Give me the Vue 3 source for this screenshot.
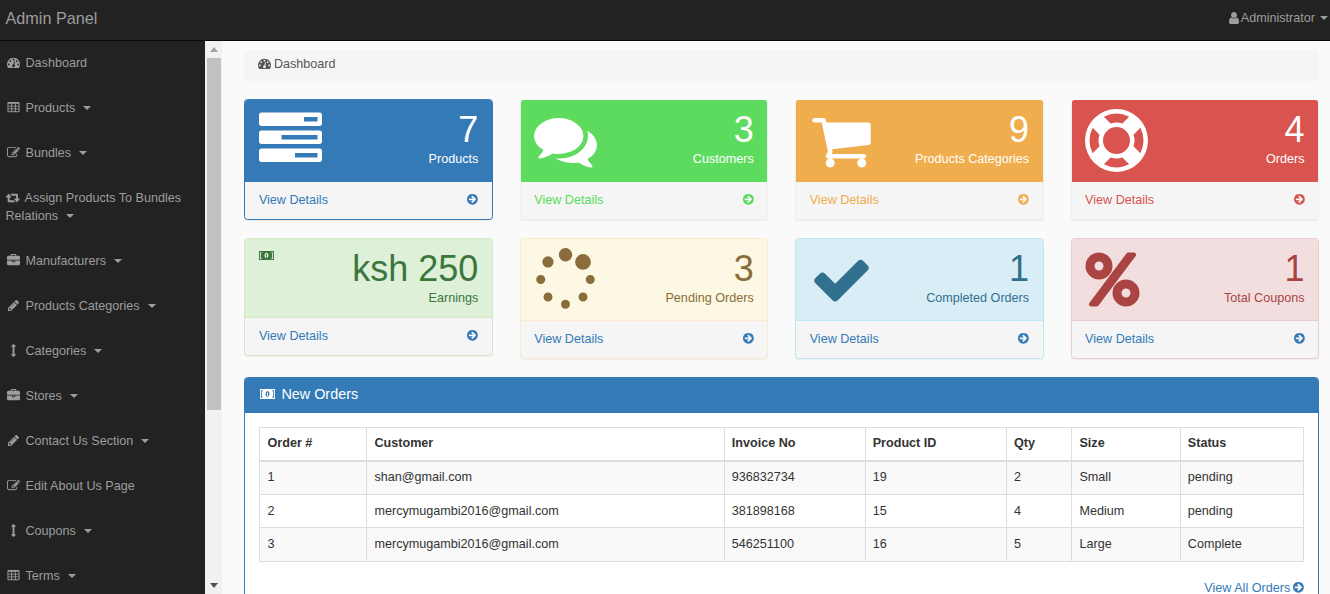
<script setup>
const icons = {
  dashboard: 'M384 1152q0-53-37.5-90.5t-90.5-37.5-90.5 37.5-37.5 90.5 37.5 90.5 90.5 37.5 90.5-37.5 37.5-90.5zm192-448q0-53-37.5-90.5t-90.5-37.5-90.5 37.5-37.5 90.5 37.5 90.5 90.5 37.5 90.5-37.5 37.5-90.5zm428 481l101-382q6-26-7.5-48.5t-38.5-29.5-48 6.5-30 39.5l-101 382q-60 5-107 43.5t-63 98.5q-20 77 20 146t117 89 146-20 89-117q16-60-6-117t-72-91zm660-33q0-53-37.5-90.5t-90.5-37.5-90.5 37.5-37.5 90.5 37.5 90.5 90.5 37.5 90.5-37.5 37.5-90.5zm-640-640q0-53-37.5-90.5t-90.5-37.5-90.5 37.5-37.5 90.5 37.5 90.5 90.5 37.5 90.5-37.5 37.5-90.5zm448 192q0-53-37.5-90.5t-90.5-37.5-90.5 37.5-37.5 90.5 37.5 90.5 90.5 37.5 90.5-37.5 37.5-90.5zm320 448q0 261-141 483-19 29-54 29h-1402q-35 0-54-29-141-221-141-483 0-182 71-348t191-286 286-191 348-71 348 71 286 191 191 286 71 348z',
  table: 'M576 1376v-192q0-14-9-23t-23-9h-320q-14 0-23 9t-9 23v192q0 14 9 23t23 9h320q14 0 23-9t9-23zm0-384v-192q0-14-9-23t-23-9h-320q-14 0-23 9t-9 23v192q0 14 9 23t23 9h320q14 0 23-9t9-23zm512 384v-192q0-14-9-23t-23-9h-320q-14 0-23 9t-9 23v192q0 14 9 23t23 9h320q14 0 23-9t9-23zm-512-768v-192q0-14-9-23t-23-9h-320q-14 0-23 9t-9 23v192q0 14 9 23t23 9h320q14 0 23-9t9-23zm512 384v-192q0-14-9-23t-23-9h-320q-14 0-23 9t-9 23v192q0 14 9 23t23 9h320q14 0 23-9t9-23zm512 384v-192q0-14-9-23t-23-9h-320q-14 0-23 9t-9 23v192q0 14 9 23t23 9h320q14 0 23-9t9-23zm-512-768v-192q0-14-9-23t-23-9h-320q-14 0-23 9t-9 23v192q0 14 9 23t23 9h320q14 0 23-9t9-23zm512 384v-192q0-14-9-23t-23-9h-320q-14 0-23 9t-9 23v192q0 14 9 23t23 9h320q14 0 23-9t9-23zm0-384v-192q0-14-9-23t-23-9h-320q-14 0-23 9t-9 23v192q0 14 9 23t23 9h320q14 0 23-9t9-23zm128-320v1088q0 66-47 113t-113 47h-1344q-66 0-113-47t-47-113v-1088q0-66 47-113t113-47h1344q66 0 113 47t47 113z',
  edit: 'M888 1184l116-116-152-152-116 116v56h96v96h56zm440-720q-16-16-33 1l-350 350q-17 17-1 33t33-1l350-350q17-17 1-33zm80 594v190q0 119-84.5 203.5t-203.5 84.5h-832q-119 0-203.5-84.5t-84.5-203.5v-832q0-119 84.5-203.5t203.5-84.5h832q63 0 117 25 15 7 18 23 3 17-9 29l-49 49q-14 14-32 8-23-6-45-6h-832q-66 0-113 47t-47 113v832q0 66 47 113t113 47h832q66 0 113-47t47-113v-126q0-13 9-22l64-64q15-15 35-7t20 29zm-96-738l288 288-672 672h-288v-288zm444 132l-92 92-288-288 92-92q28-28 68-28t68 28l152 152q28 28 28 68t-28 68z',
  retweet: 'M1216 1504q0 13-9.5 22.5t-22.5 9.5h-960q-8 0-13.5-2t-9-7-5.5-8-3-11.5-1-11.5v-600h-192q-26 0-45-19t-19-45q0-24 15-41l320-384q19-22 49-22t49 22l320 384q15 17 15 41 0 26-19 45t-45 19h-192v384h576q16 0 25 11l160 192q7 10 7 21zm640-416q0 24-15 41l-320 384q-20 23-49 23t-49-23l-320-384q-15-17-15-41 0-26 19-45t45-19h192v-384h-576q-16 0-25-12l-160-192q-7-9-7-20 0-13 9.5-22.5t22.5-9.5h960q8 0 13.5 2t9 7 5.5 8 3 11.5 1 11.5v600h192q26 0 45 19t19 45z',
  briefcase: 'M640 256h512v-128h-512v128zm1152 640v480q0 66-47 113t-113 47h-1472q-66 0-113-47t-47-113v-480h672v160q0 26 19 45t45 19h320q26 0 45-19t19-45v-160h672zm-768 0v128h-256v-128h256zm768-480v384h-1792v-384q0-66 47-113t113-47h352v-160q0-40 28-68t68-28h576q40 0 68 28t28 68v160h352q66 0 113 47t47 113z',
  pencil: 'M491 1536l91-91-235-235-91 91v107h128v128h107zm523-928q0-22-22-22-10 0-17 7l-542 542q-7 7-7 17 0 22 22 22 10 0 17-7l542-542q7-7 7-17zm-54-192l416 416-832 832h-416v-416zm683 96q0 53-37 90l-166 166-416-416 166-165q36-38 90-38 53 0 91 38l235 234q37 39 37 91z',
  arrows: 'M1216 320q0 26-19 45t-45 19h-128v1024h128q26 0 45 19t19 45-19 45l-256 256q-19 19-45 19t-45-19l-256-256q-19-19-19-45t19-45 45-19h128v-1024h-128q-26 0-45-19t-19-45 19-45l256-256q19-19 45-19t45 19l256 256q19 19 19 45z',
  user: 'M1536 1399q0 109-62.5 187t-150.5 78h-854q-88 0-150.5-78t-62.5-187q0-85 8.5-160.5t31.5-152 58.5-131 94-89 134.5-34.5q131 128 313 128t313-128q76 0 134.5 34.5t94 89 58.5 131 31.5 152 8.5 160.5zm-256-887q0 159-112.5 271.5t-271.5 112.5-271.5-112.5-112.5-271.5 112.5-271.5 271.5-112.5 271.5 112.5 112.5 271.5z',
  arrow: 'M1285 896q0-27-18-45l-91-91-362-362q-18-18-45-18t-45 18l-91 91q-18 18-18 45t18 45l189 189h-502q-26 0-45 19t-19 45v128q0 26 19 45t45 19h502l-189 189q-19 19-19 45t19 45l91 91q18 18 45 18t45-18l362-362 91-91q18-18 18-45zm251 0q0 209-103 385.5t-279.5 279.5-385.5 103-385.5-103-279.5-279.5-103-385.5 103-385.5 279.5-279.5 385.5-103 385.5 103 279.5 279.5 103 385.5z',
  tasks: 'M1024 1408h640v-128h-640v128zm-384-512h1024v-128h-1024v128zm640-512h384v-128h-384v128zm512 832v256q0 26-19 45t-45 19h-1664q-26 0-45-19t-19-45v-256q0-26 19-45t45-19h1664q26 0 45 19t19 45zm0-512v256q0 26-19 45t-45 19h-1664q-26 0-45-19t-19-45v-256q0-26 19-45t45-19h1664q26 0 45 19t19 45zm0-512v256q0 26-19 45t-45 19h-1664q-26 0-45-19t-19-45v-256q0-26 19-45t45-19h1664q26 0 45 19t19 45z',
  comments: 'M1408 768q0 139-94 257t-256.5 186.5-353.5 68.5q-86 0-176-16-124 88-278 128-36 9-86 16h-3q-11 0-20.5-8t-11.5-21q-1-3-1-6.5t.5-6.5 2-6l2.5-5 3.5-5.5 4-5 4.5-5 4-4.5q5-6 23-25t26-29.5 22.5-29 25-38.5 20.5-44q-124-72-195-177t-71-224q0-139 94-257t256.5-186.5 353.5-68.5 353.5 68.5 256.5 186.5 94 257zm384 256q0 120-71 224.5t-195 176.5q10 24 20.5 44t25 38.5 22.5 29 26 29.5 23 25q1 1 4 4.5t4.5 5 4 5 3.5 5.5l2.5 5 2 6 .5 6.5-1 6.5q-3 14-13 22t-22 7q-50-7-86-16-154-40-278-128-90 16-176 16-271 0-472-132 58 4 88 4 161 0 309-45t264-129q125-92 192-212t67-254q0-77-23-152 129 71 204 178t75 230z',
  cart: 'M704 1536q0 52-38 90t-90 38-90-38-38-90 38-90 90-38 90 38 38 90zm896 0q0 52-38 90t-90 38-90-38-38-90 38-90 90-38 90 38 38 90zm128-1088v512q0 24-16.5 42.5t-40.5 21.5l-1044 122q13 60 13 70 0 16-24 64h920q26 0 45 19t19 45-19 45-45 19h-1024q-26 0-45-19t-19-45q0-11 8-31.5t16-36 21.5-40 15.5-29.5l-177-823h-204q-26 0-45-19t-19-45 19-45 45-19h256q16 0 28.5 6.5t19.5 15.5 13 24.5 8 26 5.5 29.5 4.5 26h1201q26 0 45 19t19 45z',
  ring: 'M896 0q182 0 348 71t286 191 191 286 71 348-71 348-191 286-286 191-348 71-348-71-286-191-191-286-71-348 71-348 191-286 286-191 348-71zm0 128q-190 0-361 90l194 194q82-28 167-28t167 28l194-194q-171-90-361-90zm-678 1129l194-194q-28-82-28-167t28-167l-194-194q-90 171-90 361t90 361zm678 407q190 0 361-90l-194-194q-82 28-167 28t-167-28l-194 194q171 90 361 90zm0-384q159 0 271.5-112.5t112.5-271.5-112.5-271.5-271.5-112.5-271.5 112.5-112.5 271.5 112.5 271.5 271.5 112.5zm484-217l194 194q90-171 90-361t-90-361l-194 194q28 82 28 167t-28 167z',
  spinner: 'M526 1394q0 53-37.5 90.5t-90.5 37.5q-52 0-90-38t-38-90q0-53 37.5-90.5t90.5-37.5 90.5 37.5 37.5 90.5zm498 206q0 53-37.5 90.5t-90.5 37.5-90.5-37.5-37.5-90.5 37.5-90.5 90.5-37.5 90.5 37.5 37.5 90.5zm-704-704q0 53-37.5 90.5t-90.5 37.5-90.5-37.5-37.5-90.5 37.5-90.5 90.5-37.5 90.5 37.5 37.5 90.5zm1202 498q0 52-38 90t-90 38q-53 0-90.5-37.5t-37.5-90.5 37.5-90.5 90.5-37.5 90.5 37.5 37.5 90.5zm-964-996q0 66-47 113t-113 47-113-47-47-113 47-113 113-47 113 47 47 113zm1170 498q0 53-37.5 90.5t-90.5 37.5-90.5-37.5-37.5-90.5 37.5-90.5 90.5-37.5 90.5 37.5 37.5 90.5zm-640-704q0 80-56 136t-136 56-136-56-56-136 56-136 136-56 136 56 56 136zm530 206q0 93-66 158.5t-158 65.5q-93 0-158.5-65.5t-65.5-158.5q0-92 65.5-158t158.5-66q92 0 158 66t66 158z',
  check: 'M1671 566q0 40-28 68l-724 724-136 136q-28 28-68 28t-68-28l-136-136-362-362q-28-28-28-68t28-68l136-136q28-28 68-28t68 28l294 295 656-657q28-28 68-28t68 28l136 136q28 28 28 68z',
  percent: 'M1408 1280q0-52-38-90t-90-38-90 38-38 90 38 90 90 38 90-38 38-90zm-768-768q0-52-38-90t-90-38-90 38-38 90 38 90 90 38 90-38 38-90zm1024 768q0 159-112.5 271.5t-271.5 112.5-271.5-112.5-112.5-271.5 112.5-271.5 271.5-112.5 271.5 112.5 112.5 271.5zm-96-1088q0 20-13 38l-1056 1408q-19 26-51 26h-160q-26 0-45-19t-19-45q0-20 13-38l1056-1408q19-26 51-26h160q26 0 45 19t19 45zm-672 320q0 159-112.5 271.5t-271.5 112.5-271.5-112.5-112.5-271.5 112.5-271.5 271.5-112.5 271.5 112.5 112.5 271.5z',
  money: 'M0 384h2112v1024h-2112zM128 512v768h1856v-768zM256 640q128 0 128-128h1344q0 128 128 128v512q-128 0-128 128h-1344q0-128-128-128zM1056 576a272 320 0 1 0 1 0zM960 1152h224v-96h-64v-320h-80l-96 96 56 56 24-24v192h-64z'
}

const nav = [
  { icon: 'dashboard', label: 'Dashboard' },
  { icon: 'table', label: 'Products', caret: true },
  { icon: 'edit', label: 'Bundles', caret: true },
  { icon: 'retweet', label: 'Assign Products To Bundles Relations', caret: true, wide: true },
  { icon: 'briefcase', label: 'Manufacturers', caret: true },
  { icon: 'pencil', label: 'Products Categories', caret: true },
  { icon: 'arrows', label: 'Categories', caret: true },
  { icon: 'briefcase', label: 'Stores', caret: true },
  { icon: 'pencil', label: 'Contact Us Section', caret: true },
  { icon: 'edit', label: 'Edit About Us Page' },
  { icon: 'arrows', label: 'Coupons', caret: true },
  { icon: 'table', label: 'Terms', caret: true }
]

const cards = [
  { tone: 'blue', icon: 'tasks', value: '7', label: 'Products' },
  { tone: 'green', icon: 'comments', value: '3', label: 'Customers' },
  { tone: 'orange', icon: 'cart', value: '9', label: 'Products Categories' },
  { tone: 'red', icon: 'ring', value: '4', label: 'Orders' },
  { tone: 'success', icon: 'money', value: 'ksh 250', label: 'Earnings', small: true },
  { tone: 'warning', icon: 'spinner', value: '3', label: 'Pending Orders' },
  { tone: 'info', icon: 'check', value: '1', label: 'Completed Orders' },
  { tone: 'danger', icon: 'percent', value: '1', label: 'Total Coupons' }
]

const headers = ['Order #', 'Customer', 'Invoice No', 'Product ID', 'Qty', 'Size', 'Status']
const rows = [
  ['1', 'shan@gmail.com', '936832734', '19', '2', 'Small', 'pending'],
  ['2', 'mercymugambi2016@gmail.com', '381898168', '15', '4', 'Medium', 'pending'],
  ['3', 'mercymugambi2016@gmail.com', '546251100', '16', '5', 'Large', 'Complete']
]
</script>

<template>
  <div class="page">
    <header class="navbar">
      <span class="brand">Admin Panel</span>
      <span class="account">
        <svg class="ico user" viewBox="0 0 1792 1792"><path :d="icons.user" /></svg>
        Administrator
        <i class="caret account-caret"></i>
      </span>
    </header>

    <div class="shell">
      <aside class="sidebar">
        <nav class="menu">
          <a v-for="item in nav" :key="item.label" class="menu-item">
            <svg
              class="ico menu-ico"
              :class="{ 'menu-ico-wide': item.wide }"
              :viewBox="item.wide ? '0 0 1920 1792' : '0 0 1792 1792'"
            ><path :d="icons[item.icon]" /></svg>{{ item.label }}<i v-if="item.caret" class="caret menu-caret"></i>
          </a>
        </nav>
        <div class="scrollbar">
          <i class="sb-arrow sb-up"></i>
          <div class="sb-track"><div class="sb-thumb"></div></div>
          <i class="sb-arrow sb-down"></i>
        </div>
      </aside>

      <main class="content">
        <div class="breadcrumb">
          <svg class="ico crumb-ico" viewBox="0 0 1792 1792"><path :d="icons.dashboard" /></svg>Dashboard
        </div>

        <section class="cards">
          <article v-for="card in cards" :key="card.tone" class="card" :class="'tone-' + card.tone">
            <div class="card-head" :class="{ 'card-head-small': card.small }">
              <svg v-if="card.small" class="ico money-small" viewBox="0 384 2112 1024" preserveAspectRatio="none"><path fill-rule="evenodd" :d="icons.money" /></svg>
              <svg v-else class="ico big-ico" viewBox="0 0 1792 1792"><path :d="icons[card.icon]" /></svg>
              <div class="card-text">
                <div class="card-value">{{ card.value }}</div>
                <div class="card-label">{{ card.label }}</div>
              </div>
            </div>
            <a class="card-foot">
              <span>View Details</span>
              <svg class="ico foot-ico" viewBox="0 0 1536 1792"><path :d="icons.arrow" /></svg>
            </a>
          </article>
        </section>

        <section class="panel">
          <h3 class="panel-head">
            <svg class="ico panel-ico" viewBox="0 384 2112 1024" preserveAspectRatio="none"><path fill-rule="evenodd" :d="icons.money" /></svg>New Orders
          </h3>
          <div class="panel-body">
            <table class="orders">
              <thead>
                <tr><th v-for="h in headers" :key="h">{{ h }}</th></tr>
              </thead>
              <tbody>
                <tr v-for="row in rows" :key="row[0]">
                  <td v-for="(cell, i) in row" :key="i">{{ cell }}</td>
                </tr>
              </tbody>
            </table>
            <a class="all-orders">View All Orders<svg class="ico all-ico" viewBox="0 0 1536 1792"><path :d="icons.arrow" /></svg></a>
          </div>
        </section>
      </main>
    </div>
  </div>
</template>

<style>
html, body { margin: 0; overflow: hidden; }
</style>

<style scoped>
.page {
  height: 100vh;
  display: flex;
  flex-direction: column;
  overflow: hidden;
  font-family: "Liberation Sans", Arial, sans-serif;
  font-size: 12.6px;
  line-height: 18px;
  color: #333;
}
.ico { fill: currentColor; flex: none; }
.caret {
  display: inline-block;
  width: 0;
  height: 0;
  border-top: 4px solid currentColor;
  border-left: 4px solid transparent;
  border-right: 4px solid transparent;
}

.navbar {
  height: 40px;
  box-sizing: content-box;
  flex: none;
  display: flex;
  align-items: center;
  justify-content: space-between;
  background: #222;
  border-bottom: 1px solid #080808;
  color: #9d9d9d;
  padding: 0 2px 0 5.5px;
}
.brand { font-size: 16.2px; position: relative; top: -2px; }
.account { display: flex; align-items: center; position: relative; top: -2px; }
.user { width: 14px; height: 14px; }
.account-caret { margin-left: 5px; }

.shell { flex: 1; min-height: 0; display: flex; }
.sidebar { flex: none; width: 222px; display: flex; background: #222; }
.menu { width: 205px; overflow: hidden; color: #9d9d9d; }
.menu-item {
  display: block;
  padding: 12.5px 5.5px 14.5px;
}
.menu-ico { width: 13px; height: 13px; margin: 0 6px 0 1px; vertical-align: -2px; }
.menu-ico-wide { width: 14.5px; margin-right: 4px; margin-left: 0.5px; }
.menu-caret { margin-left: 8px; vertical-align: 2px; }

.scrollbar {
  width: 17px;
  background: #f1f1f1;
  display: flex;
  flex-direction: column;
  align-items: center;
}
.sb-arrow { flex: none; width: 0; height: 0; border-left: 4px solid transparent; border-right: 4px solid transparent; }
.sb-up { margin: 6px 0 6px; border-bottom: 5px solid #a3a3a3; }
.sb-down { margin: 6px 0; border-top: 5px solid #505050; }
.sb-track { flex: 1; width: 100%; }
.sb-thumb { width: 14px; height: 352px; margin-left: 2px; background: #c1c1c1; }

.content {
  flex: 1;
  min-width: 0;
  background: #fafafa;
  padding: 9px 11px 0 22.4px;
  overflow: hidden;
}
.breadcrumb {
  height: 31px;
  box-sizing: border-box;
  padding: 5px 13.5px;
  background: #f5f5f5;
  border-radius: 3.6px;
  color: #555;
  margin-bottom: 18px;
}
.crumb-ico { width: 13px; height: 13px; margin-right: 3px; vertical-align: -2px; }

.cards {
  display: grid;
  grid-template-columns: repeat(4, 1fr);
  column-gap: 27px;
  row-gap: 18px;
  align-items: start;
  margin-bottom: 18px;
}
.card {
  border: 1px solid transparent;
  border-radius: 3.6px;
  background: #f5f5f5;
  box-shadow: 0 1px 1px rgba(0, 0, 0, 0.05);
  overflow: hidden;
  background-clip: padding-box;
}
.card-head {
  display: flex;
  justify-content: space-between;
  align-items: flex-start;
  padding: 10px 13.5px 9px;
  height: 82px;
  box-sizing: border-box;
}
.card-head-small { height: 79px; }
.big-ico { width: 63px; height: 63px; margin-top: -1px; }
.tone-blue .big-ico { margin-top: -2px; }
.tone-danger .big-ico { margin-left: -4.5px; }
.money-small { width: 15px; height: 9px; margin-top: 2px; }
.card-text { text-align: right; }
.card-value { font-size: 36px; line-height: 39.6px; }
.card-foot {
  display: flex;
  justify-content: space-between;
  align-items: center;
  padding: 8px 13.5px 10px;
  height: 37px;
  box-sizing: border-box;
  color: #337ab7;
}
.foot-ico { width: 10.8px; height: 12.6px; }

.tone-blue { border-color: #337ab7; }
.tone-blue .card-head { background: #337ab7; color: #fff; }
.tone-green .card-head { background: #5cdb5e; color: #fff; }
.tone-green .card-foot { color: #5cdb5e; }
.tone-orange .card-head { background: #f0ad4e; color: #fff; }
.tone-orange .card-foot { color: #f0ad4e; }
.tone-red .card-head { background: #d9534f; color: #fff; }
.tone-red .card-foot { color: #d9534f; }
.tone-success { border-color: #d6e9c6; }
.tone-success .card-head { background: #dff0d8; color: #3c763d; border-bottom: 1px solid #d6e9c6; }
.tone-warning { border-color: #faebcc; }
.tone-warning .card-head { background: #fcf8e3; color: #8a6d3b; border-bottom: 1px solid #faebcc; }
.tone-info { border-color: #bce8f1; }
.tone-info .card-head { background: #d9edf7; color: #31708f; border-bottom: 1px solid #bce8f1; }
.tone-danger { border-color: #ebccd1; }
.tone-danger .card-head { background: #f2dede; color: #a94442; border-bottom: 1px solid #ebccd1; }

.panel {
  border: 1px solid #337ab7;
  border-radius: 3.6px 3.6px 0 0;
  background: #fff;
  overflow: hidden;
}
.panel-head {
  margin: 0;
  height: 35px;
  box-sizing: border-box;
  display: flex;
  align-items: center;
  padding: 0 14px 3px;
  background: #337ab7;
  color: #fff;
  font-size: 14.4px;
  font-weight: 400;
}
.panel-ico { width: 15px; height: 10px; margin-right: 6.5px; margin-left: 0.5px; }
.panel-body { padding: 14px 14px 40px; }
.orders {
  width: 100%;
  table-layout: fixed;
  border-collapse: collapse;
  color: #333;
}
.orders th, .orders td {
  border: 1px solid #ddd;
  padding: 6.7px 7.2px 7.7px;
  text-align: left;
  line-height: 18px;
}
.orders th { border-bottom-width: 2px; font-weight: 700; padding: 6.2px 7.2px 7.4px; }
.orders tbody tr:nth-child(odd) { background: #f9f9f9; }
.orders th:nth-child(1) { width: 91.5px; }
.orders th:nth-child(2) { width: 342px; }
.orders th:nth-child(3) { width: 125.5px; }
.orders th:nth-child(4) { width: 126px; }
.orders th:nth-child(5) { width: 50px; }
.orders th:nth-child(6) { width: 93px; }
.all-orders {
  display: flex;
  justify-content: flex-end;
  align-items: center;
  margin-top: 17px;
  color: #337ab7;
}
.all-ico { width: 10.8px; height: 12.6px; margin-left: 3px; }
</style>
